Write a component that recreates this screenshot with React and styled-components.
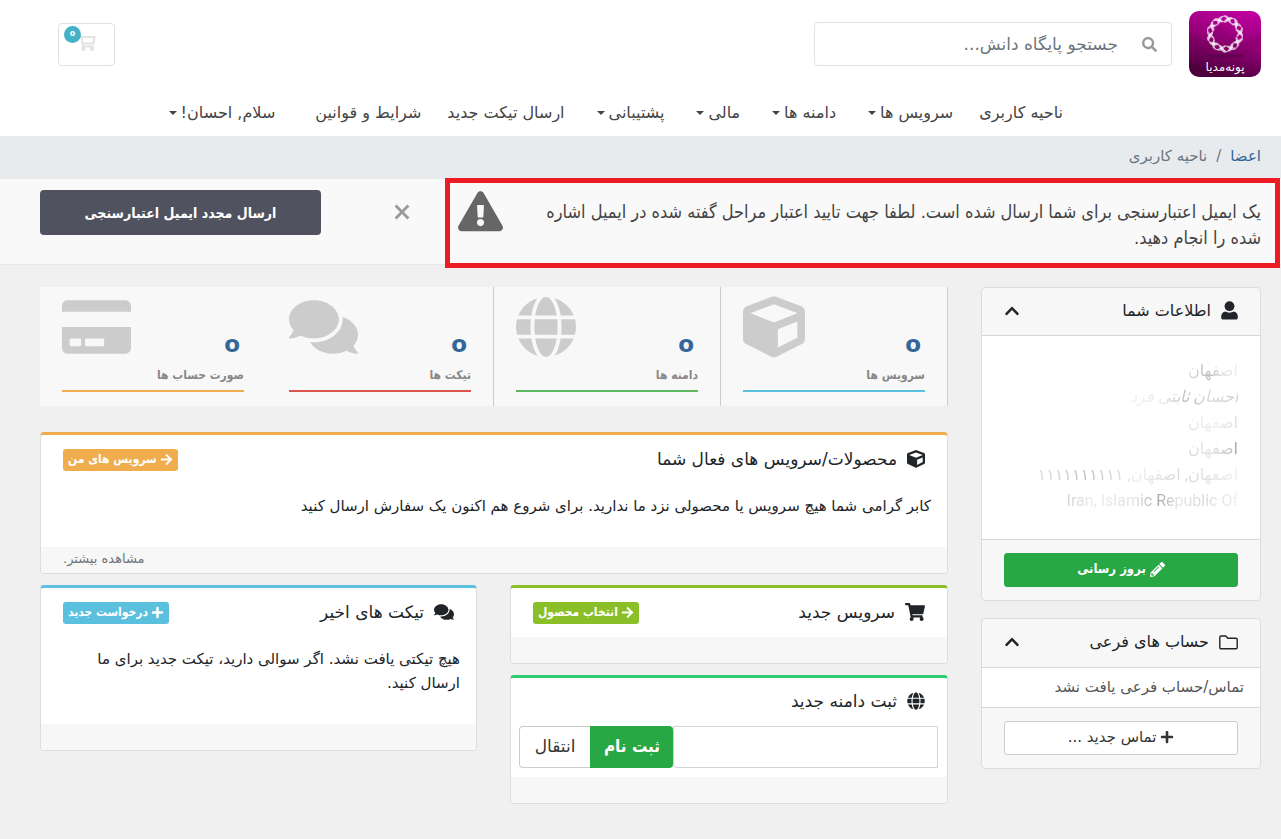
import React from 'react'
import styled, { createGlobalStyle, css } from 'styled-components'
import {
  FaSearch,
  FaExclamationTriangle,
  FaCube,
  FaGlobe,
  FaComments,
  FaCreditCard,
  FaArrowRight,
  FaPlus,
  FaPencilAlt,
  FaShoppingCart,
  FaChevronUp
} from 'react-icons/fa'

const condensed = '"DejaVu Sans Condensed", "DejaVu Sans", sans-serif'

const GlobalStyle = createGlobalStyle`
  * {
    box-sizing: border-box;
  }
  body {
    margin: 0;
    background-color: #f0f0f0;
    color: #212529;
    font-family: "DejaVu Sans", sans-serif;
    font-size: 15px;
    line-height: 24px;
  }
  a {
    color: inherit;
    text-decoration: none;
  }
  button, input {
    font: inherit;
    color: inherit;
  }
  h2, h3, p, ul, ol {
    margin: 0;
    padding: 0;
    font-weight: normal;
    list-style: none;
  }
  svg {
    display: block;
    flex: none;
  }
`

const Header = styled.header`
  padding: 11px 20px 0 58px;
  background-color: #fff;
`

const HeaderTop = styled.div`
  display: flex;
  align-items: flex-start;
  height: 78px;
`

const LogoLink = styled.a`
  display: block;
  margin-left: 17px;
`

const Search = styled.form`
  display: flex;
  align-items: center;
  width: 358px;
  height: 44px;
  margin-top: 11px;
  padding-right: 14px;
  border: 1px solid #e1e1e1;
  border-radius: 4px;
  color: #999;
`

const SearchInput = styled.input`
  flex: 1;
  min-width: 0;
  padding: 0 24px 0 12px;
  border: 0;
  background: none;
  font-size: 17px;
  outline: 0;
  &::placeholder {
    color: #6c757d;
    opacity: 1;
  }
`

const CartButton = styled.a`
  position: relative;
  width: 57px;
  height: 43px;
  margin: 12px auto 0 0;
  padding: 12px 18px;
  border: 1px solid #e1e1e1;
  border-radius: 4px;
`

const CartCount = styled.span`
  position: absolute;
  top: 2px;
  left: 5px;
  width: 17px;
  height: 17px;
  border-radius: 50%;
  background-color: #43b1c7;
  color: #fff;
  font-size: 8px;
  font-weight: bold;
  line-height: 15px;
  text-align: center;
`

const Nav = styled.nav`
  padding: 12px 198px 11px 0;
`

const NavList = styled.ul`
  display: flex;
  gap: 26px;
`

const NavItem = styled.li`
  white-space: nowrap;
  color: #444;
  font-size: 16px;
  ${({ $apart }) => $apart && css`
    margin-right: 14px;
  `}
`

const NavLink = styled.a`
  display: flex;
  align-items: center;
  gap: 4px;
`

const Caret = styled.span`
  margin-left: 6px;
  border: 4px solid transparent;
  border-top-color: #444;
  border-bottom: 0;
`

const Breadcrumb = styled.ol`
  display: flex;
  gap: 9px;
  padding: 8px 20px 11px;
  background-color: #e7ebee;
  color: #6c757d;
  a {
    color: #336699;
  }
`

const Notice = styled.section`
  display: flex;
  align-items: flex-start;
  min-height: 86px;
  padding-left: 40px;
  border-bottom: 1px solid #e8e8e8;
  background-color: #f9f9f9;
  color: #444;
`

const NoticeMessage = styled.div`
  position: relative;
  display: flex;
  flex: 1;
  align-self: stretch;
  align-items: flex-start;
  gap: 24px;
  padding: 12px 20px 0 14px;
  font-family: ${condensed};
  font-size: 18px;
  line-height: 26px;
  &::after {
    content: '';
    position: absolute;
    inset: -1px 1px -4px 1px;
    border: 5px solid #ed1c24;
  }
  p {
    flex: 1;
    padding-top: 8px;
  }
`

const CloseButton = styled.button`
  margin: 25px 34px 0 73px;
  padding: 0;
  border: 0;
  background: none;
  color: #999;
`

const ResendButton = styled.button`
  width: 281px;
  height: 45px;
  margin-top: 11px;
  border: 0;
  border-radius: 4px;
  background-color: #50525f;
  color: #fff;
  font-family: ${condensed};
  font-size: 14px;
  font-weight: bold;
`

const Page = styled.main`
  display: grid;
  grid-template-columns: 280px 1fr;
  gap: 33px;
  align-items: start;
  padding: 22px 20px 35px 40px;
`

const Column = styled.div`
  display: flex;
  flex-direction: column;
  min-width: 0;
  gap: ${({ $gap }) => $gap || 11}px;
`

const Card = styled.section`
  border: 1px solid #ddd;
  border-radius: 4px;
  background-color: #f7f7f7;
`

const CardHeader = styled.div`
  display: flex;
  align-items: center;
  justify-content: space-between;
  height: ${({ $height }) => $height || 48}px;
  padding: 0 22px 2px;
`

const Heading = styled.h3`
  display: flex;
  align-items: center;
  gap: 10px;
  font-size: ${({ $small }) => ($small ? 16 : 17)}px;
`

const CardBody = styled.div`
  border: solid #d6d6d6;
  border-width: 1px 0;
  background-color: #fff;
`

const Address = styled(CardBody)`
  height: 205px;
  padding: 22px;
  font-family: Roboto, "DejaVu Sans", sans-serif;
  font-size: 16px;
  line-height: 26px;
`

const AddressLine = styled.p`
  width: fit-content;
  background: linear-gradient(to left, ${({ $fade }) => $fade});
  background-clip: text;
  color: transparent;
  font-style: ${({ $italic }) => ($italic ? 'italic' : 'normal')};
  white-space: nowrap;
`

const EmptyRow = styled(CardBody)`
  padding: 7px 16px 8px;
  color: #555;
`

const CardFooter = styled.div`
  padding: 13px 22px;
`

const BlockButton = styled.button`
  display: flex;
  align-items: center;
  justify-content: center;
  gap: 4px;
  width: 100%;
  height: 34px;
  padding: 0 0 2px;
  border: 1px solid #ccc;
  border-radius: 3px;
  background-color: #fff;
  color: #333;
  ${({ $green }) => $green && css`
    border-color: #28a745;
    background-color: #28a745;
    color: #fff;
    font-family: ${condensed};
    font-size: 13px;
    font-weight: bold;
  `}
`

const ToggleButton = styled.button`
  padding: 0;
  border: 0;
  background: none;
`

const Stats = styled.ul`
  display: grid;
  grid-template-columns: repeat(4, 1fr);
  margin-bottom: 15px;
  background-color: #f8f8f8;
`

const StatItem = styled.li`
  height: 119px;
  padding: 9px 22px 0;
  border-right: 1px solid ${({ $divided }) => ($divided ? '#ccc' : 'transparent')};
`

const StatTop = styled.div`
  display: flex;
  justify-content: space-between;
  height: 67px;
  color: #ccc;
`

const StatValue = styled.a`
  padding: 32px 4px 0 0;
  color: #336699;
  font-size: 23px;
  font-weight: bold;
  line-height: 32px;
`

const StatLabel = styled.p`
  padding-bottom: 3px;
  border-bottom: 2px solid ${({ $color }) => $color};
  color: #888;
  font-family: ${condensed};
  font-size: 12px;
  font-weight: bold;
`

const Panel = styled.section`
  overflow: hidden;
  border: 1px solid #ddd;
  border-top: 3px solid ${({ $color }) => $color};
  border-radius: 4px;
  background-color: #fff;
`

const PanelText = styled.p`
  padding: 10px 16px 29px;
`

const PanelFooter = styled.div`
  min-height: 26px;
  padding: 0 22px 2px;
  background-color: #f7f7f7;
  color: #6c757d;
  font-size: 13px;
  text-align: left;
`

const Tag = styled.a`
  display: flex;
  align-items: center;
  gap: 3px;
  height: 22px;
  margin-top: 2px;
  padding: 0 5px 1px;
  border-radius: 3px;
  background-color: ${({ $color }) => $color};
  color: #fff;
  font-family: ${condensed};
  font-size: 12px;
  font-weight: bold;
`

const Split = styled.div`
  display: grid;
  grid-template-columns: 438fr 437fr;
  gap: 33px;
  align-items: start;
`

const DomainForm = styled.form`
  display: flex;
  height: 42px;
  margin: 0 9px 9px 8px;
  font-size: 17px;
`

const DomainInput = styled.input`
  flex: 1;
  min-width: 0;
  border: 1px solid #ced4da;
  border-radius: 0 0 0 4px;
  outline: 0;
`

const DomainButton = styled.button`
  width: 71px;
  padding: 0 0 2px;
  border: 1px solid #ccc;
  border-right: 0;
  border-radius: 4px 0 0 4px;
  background-color: #fff;
  color: #333;
  ${({ $green }) => $green && css`
    width: 83px;
    border-color: #28a745;
    border-radius: 0 4px 4px 0;
    background-color: #28a745;
    color: #fff;
    font-family: ${condensed};
    font-weight: bold;
  `}
`

// one wavy strand of the braided ring in the logo
const strand = (radius, depth, phase) => {
  const points = []
  for (let i = 0; i < 180; i += 1) {
    const a = (i / 180) * Math.PI * 2
    const r = radius + depth * Math.sin(a * 5 + phase)
    points.push(`${(36 + r * Math.cos(a)).toFixed(2)} ${(23 + r * Math.sin(a)).toFixed(2)}`)
  }
  return `M${points.join('L')}Z`
}

const Logo = () => (
  <svg width="72" height="66" viewBox="0 0 72 66" role="img" aria-label="پونه‌مدیا">
    <defs>
      <linearGradient id="logo-bg" x1="0.8" y1="0" x2="0.5" y2="1">
        <stop offset="0" stopColor="#c000a0" />
        <stop offset="0.5" stopColor="#930077" />
        <stop offset="1" stopColor="#4d003c" />
      </linearGradient>
    </defs>
    <rect width="72" height="66" rx="10" fill="url(#logo-bg)" />
    <path d="M0 20l16 10 14-16 22 20 20-14v14L52 46 30 40 12 50 0 42Z" fill="#6a0055" opacity="0.18" />
    <ellipse cx="36" cy="45" rx="20" ry="2" fill="#5c0048" opacity="0.6" />
    <path
      d={strand(15, 3, 0) + strand(15, 3, 1.2)}
      fill="#fff"
      fillRule="evenodd"
      opacity="0.75"
    />
    <path
      d={strand(15, 3.2, Math.PI) + strand(15, 3.2, Math.PI + 1)}
      fill="#fff"
      fillRule="evenodd"
      opacity="0.6"
    />
    <g fill="none" stroke="#fff" strokeWidth="0.7">
      <path d={strand(15, 3.2, 0)} />
      <path d={strand(15, 3.2, Math.PI)} />
    </g>
    <text x="36" y="60" fill="#fff" fontSize="12" textAnchor="middle">پونه‌مدیا</text>
  </svg>
)

const CartOutline = () => (
  <svg width="17" height="15" viewBox="0 0 17 15" fill="none" stroke="#e2e2e2" strokeWidth="2">
    <path d="M0 1h15.6l-1.2 6.4H3.6L2.6 1M4 8v2.6h10.6" />
    <circle cx="4.4" cy="12.8" r="1.2" />
    <circle cx="12.8" cy="12.8" r="1.2" />
  </svg>
)

const CloseMark = () => (
  <svg width="16" height="16" viewBox="0 0 16 16" stroke="currentColor" strokeWidth="2.8">
    <path d="M1.6 1.6l12.8 12.8M14.4 1.6L1.6 14.4" />
  </svg>
)

const UserIcon = () => (
  <svg width="17" height="19" viewBox="0 0 17 19" fill="currentColor">
    <circle cx="8.5" cy="5.2" r="4.9" />
    <path d="M4.6 10.6c1 .7 2.4 1.1 3.9 1.1s2.9-.4 3.9-1.1c2.6.3 4.4 2.2 4.4 4.8v1.3c0 1-.8 1.8-1.8 1.8H2c-1 0-1.8-.8-1.8-1.8v-1.3c0-2.6 1.8-4.5 4.4-4.8Z" />
  </svg>
)

const FolderIcon = () => (
  <svg width="19" height="15" viewBox="0 0 19 15" fill="none" stroke="currentColor" strokeWidth="1.4">
    <path d="M2 1h4.8l2 2.2H17q1.2 0 1.2 1.2v8.2q0 1.2-1.2 1.2H2q-1.2 0-1.2-1.2V2.2Q.8 1 2 1Z" />
  </svg>
)

const navItems = [
  { label: 'ناحیه کاربری' },
  { label: 'سرویس ها', menu: true },
  { label: 'دامنه ها', menu: true },
  { label: 'مالی', menu: true },
  { label: 'پشتیبانی', menu: true },
  { label: 'ارسال تیکت جدید' },
  { label: 'شرایط و قوانین' },
  { label: 'سلام, احسان!', menu: true, apart: true }
]

const addressLines = [
  { text: 'اصفهان', fade: '#eee, #e4e4e4 30%, #bbb 60%, #ddd' },
  { text: 'احسان ثابتی فرد', fade: '#d0d0d0, #dcdcdc 25%, #b8b8b8 45%, #eaeaea 70%, #f0f0f0', italic: true },
  { text: 'اصفهان', fade: '#dcdcdc, #f2f2f2 50%, #e2e2e2' },
  { text: 'اصفهان', fade: '#9a9a9a, #ccc 20%, #e4e4e4 60%, #d6d6d6' },
  { text: 'اصفهان, اصفهان, ۱۱۱۱۱۱۱۱۱۱', fade: '#f0f0f0, #d8d8d8 25%, #eee 50%, #c0c0c0 75%, #ddd' },
  { text: 'Iran, Islamic Republic Of', fade: '#f0f0f0, #dadada 20%, #e6e6e6 35%, #a8a8a8 46%, #e2e2e2 60%, #eaeaea 85%, #d4d4d4' }
]

const stats = [
  { label: 'سرویس ها', color: '#5bc0de', Icon: FaCube, width: 62, divided: true },
  { label: 'دامنه ها', color: '#5cb85c', Icon: FaGlobe, width: 60, divided: true },
  { label: 'تیکت ها', color: '#d9534f', Icon: FaComments, width: 69, divided: true },
  { label: 'صورت حساب ها', color: '#f0ad4e', Icon: FaCreditCard, width: 69 }
]

const App = () => (
  <div dir="rtl" lang="fa">
    <GlobalStyle />
    <Header>
      <HeaderTop>
        <LogoLink href="#"><Logo /></LogoLink>
        <Search>
          <FaSearch size={15} />
          <SearchInput type="text" aria-label="جستجو" placeholder="جستجو پایگاه دانش..." />
        </Search>
        <CartButton href="#">
          <CartOutline />
          <CartCount>o</CartCount>
        </CartButton>
      </HeaderTop>
      <Nav>
        <NavList>
          {navItems.map(({ label, menu, apart }) => (
            <NavItem key={label} $apart={apart}>
              <NavLink href="#">
                {label}
                {menu && <Caret />}
              </NavLink>
            </NavItem>
          ))}
        </NavList>
      </Nav>
    </Header>
    <Breadcrumb>
      <li><a href="#">اعضا</a></li>
      <li>/</li>
      <li>ناحیه کاربری</li>
    </Breadcrumb>
    <Notice>
      <NoticeMessage>
        <p>یک ایمیل اعتبارسنجی برای شما ارسال شده است. لطفا جهت تایید اعتبار مراحل گفته شده در ایمیل اشاره شده را انجام دهید.</p>
        <FaExclamationTriangle color="#666" size={45} viewBox="0 28 576 512" />
      </NoticeMessage>
      <CloseButton type="button" aria-label="بستن"><CloseMark /></CloseButton>
      <ResendButton type="button">ارسال مجدد ایمیل اعتبارسنجی</ResendButton>
    </Notice>
    <Page>
      <Column $gap={17}>
        <Card>
          <CardHeader $height={47}>
            <Heading $small><UserIcon />اطلاعات شما</Heading>
            <ToggleButton type="button" aria-label="اطلاعات شما"><FaChevronUp size={16} /></ToggleButton>
          </CardHeader>
          <Address>
            {addressLines.map(({ text, fade, italic }, index) => (
              <AddressLine key={index} $fade={fade} $italic={italic}>{text}</AddressLine>
            ))}
          </Address>
          <CardFooter>
            <BlockButton type="button" $green><FaPencilAlt size={15} />بروز رسانی</BlockButton>
          </CardFooter>
        </Card>
        <Card>
          <CardHeader>
            <Heading $small><FolderIcon />حساب های فرعی</Heading>
            <ToggleButton type="button" aria-label="حساب های فرعی"><FaChevronUp size={16} /></ToggleButton>
          </CardHeader>
          <EmptyRow>تماس/حساب فرعی یافت نشد</EmptyRow>
          <CardFooter>
            <BlockButton type="button"><FaPlus size={14} />تماس جدید ...</BlockButton>
          </CardFooter>
        </Card>
      </Column>
      <Column>
        <Stats>
          {stats.map(({ label, color, Icon, width, divided }) => (
            <StatItem key={label} $divided={divided}>
              <StatTop>
                <StatValue href="#">o</StatValue>
                <Icon style={{ width, height: 62 }} />
              </StatTop>
              <StatLabel $color={color}>{label}</StatLabel>
            </StatItem>
          ))}
        </Stats>
        <Panel $color="#f0ad4e">
          <CardHeader $height={49}>
            <Heading><FaCube size={18} />محصولات/سرویس های فعال شما</Heading>
            <Tag href="#" $color="#f0ad4e"><FaArrowRight size={13} />سرویس های من</Tag>
          </CardHeader>
          <PanelText>کابر گرامی شما هیچ سرویس یا محصولی نزد ما ندارید. برای شروع هم اکنون یک سفارش ارسال کنید</PanelText>
          <PanelFooter><a href="#">مشاهده بیشتر.</a></PanelFooter>
        </Panel>
        <Split>
          <Column>
            <Panel $color="#8bbf27">
              <CardHeader $height={49}>
                <Heading><FaShoppingCart size={20} />سرویس جدید</Heading>
                <Tag href="#" $color="#8bbf27"><FaArrowRight size={13} />انتخاب محصول</Tag>
              </CardHeader>
              <PanelFooter />
            </Panel>
            <Panel $color="#2ecc71">
              <CardHeader>
                <Heading><FaGlobe size={18} />ثبت دامنه جدید</Heading>
              </CardHeader>
              <DomainForm>
                <DomainInput type="text" aria-label="ثبت دامنه جدید" />
                <DomainButton type="button" $green>ثبت نام</DomainButton>
                <DomainButton type="button">انتقال</DomainButton>
              </DomainForm>
              <PanelFooter />
            </Panel>
          </Column>
          <Panel $color="#5bc0de">
            <CardHeader $height={49}>
              <Heading><FaComments size={20} />تیکت های اخیر</Heading>
              <Tag href="#" $color="#5bc0de"><FaPlus size={13} />درخواست جدید</Tag>
            </CardHeader>
            <PanelText>هیچ تیکتی یافت نشد. اگر سوالی دارید، تیکت جدید برای ما ارسال کنید.</PanelText>
            <PanelFooter />
          </Panel>
        </Split>
      </Column>
    </Page>
  </div>
)

export default App
